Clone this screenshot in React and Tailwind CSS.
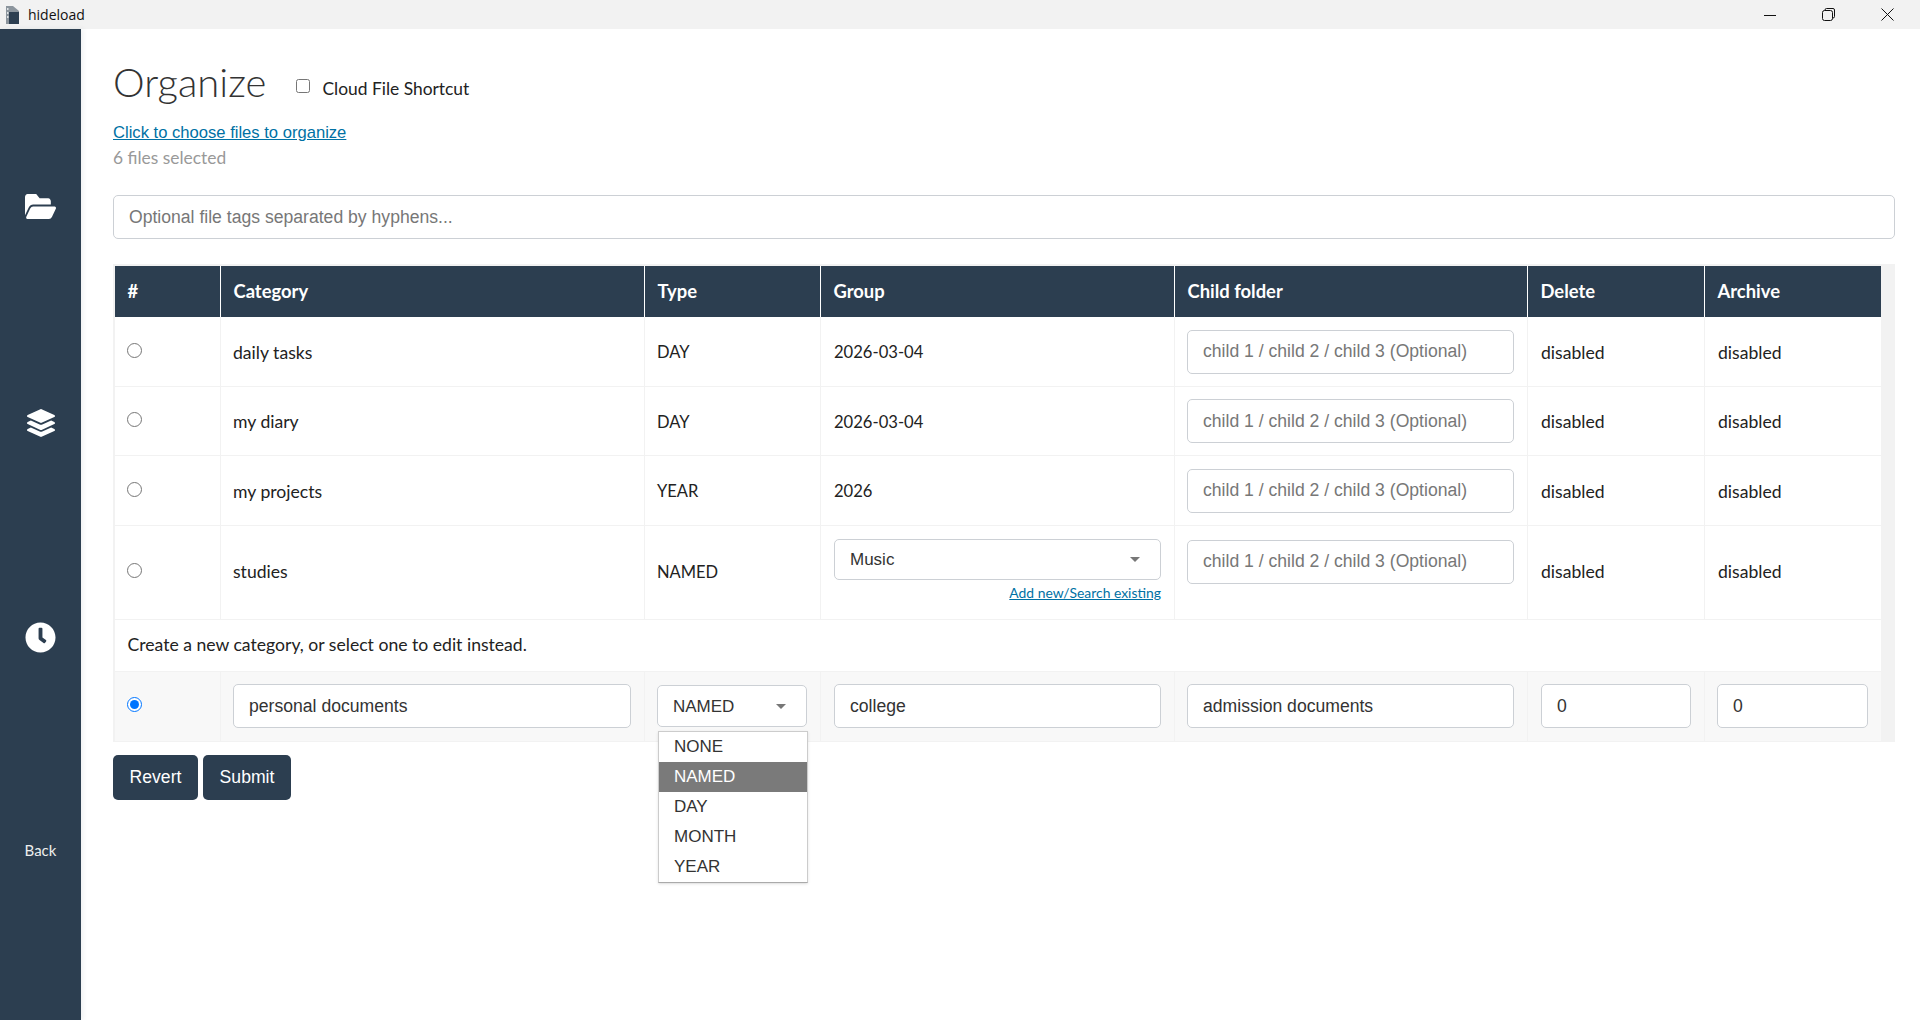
import { FaFolderOpen, FaLayerGroup, FaClock } from "react-icons/fa";

const cols = "grid grid-cols-[105px_424px_176px_354px_353px_177px_177px]";
const cell = "flex items-center pl-[12px] pr-[13px] border-l border-[#f2f2f2]";
const textCell = "flex items-center pl-[13px] pr-[12px] border-l border-[#f2f2f2]";
const sans = "font-['Liberation_Sans',sans-serif]";
const inputCls = `w-full h-[44px] rounded-[5px] border border-[#ccd0d5] bg-white px-[15px] text-[17.6px] text-[#333] outline-none placeholder:text-[#777] ${sans}`;

const rows = [
  { name: "daily tasks", type: "DAY", group: "2026-03-04" },
  { name: "my diary", type: "DAY", group: "2026-03-04" },
  { name: "my projects", type: "YEAR", group: "2026" },
];

function Caret() {
  return <span className="ml-auto mr-[5px] w-0 h-0 border-x-[5px] border-x-transparent border-t-[5px] border-t-[#777]" />;
}

function Radio({ checked }) {
  return <input type="radio" readOnly checked={!!checked} className="w-[15px] h-[15px] m-0 accent-[#0075ff]" />;
}

function ChildInput() {
  return <input placeholder="child 1 / child 2 / child 3 (Optional)" className={inputCls} />;
}

export default function App() {
  return (
    <div className="h-[1020px] overflow-hidden bg-white text-[#222] font-['Lato',sans-serif] text-[17.6px]">
      <div className="h-[29px] bg-[#f2f2f2] flex items-center">
        <svg width="13" height="18" viewBox="0 0 13 18" className="ml-[6px]">
          <path d="M0 0h7l6 5v13H0z" fill="#8c959d" />
          <path d="M3 6h10v12H3z" fill="#2c3e50" />
          <path d="M1 2h1.500v2H1zM1 6h1.500v2H1zM1 10h1.500v2H1z" fill="#dfe3e6" />
        </svg>
        <span className="ml-[9px] text-[14px] text-[#111] font-['Open_Sans',sans-serif]">hideload</span>
        <div className="ml-auto flex items-center">
          <svg width="12" height="12" viewBox="0 0 12 12" className="mr-[46px]"><path d="M0 6.5h12" stroke="#111" strokeWidth="1" /></svg>
          <svg width="13" height="13" viewBox="0 0 13 13" className="mr-[46px]" fill="none" stroke="#111"><rect x="0.5" y="2.5" width="10" height="10" rx="2" /><path d="M3 2.5V2a1.500 1.500 0 0 1 1.500-1.500h6.500a1.500 1.500 0 0 1 1.500 1.500v6.500a1.500 1.500 0 0 1-1.500 1.500h-.5" /></svg>
          <svg width="13" height="13" viewBox="0 0 13 13" className="mr-[26px]" stroke="#111" strokeWidth="1"><path d="M.5.5l12 12M12.500.5l-12 12" /></svg>
        </div>
      </div>

      <div className="flex h-[991px]">
        <aside className="w-[81px] shrink-0 bg-[#2c3e50] text-white flex flex-col items-center shadow-[2px_0_5px_rgba(44,62,80,0.08)]">
          <FaFolderOpen viewBox="0 64 576 384" preserveAspectRatio="none" className="mt-[165px] !w-[31px] !h-[25px]" />
          <FaLayerGroup className="mt-[190px] text-[28px]" />
          <FaClock className="mt-[185px] text-[31px]" />
          <span className="mt-[186px] text-[15px] text-[#eee]">Back</span>
        </aside>

        <main className="flex-1 pl-[32px] pr-[25px]">
          <div className="flex items-center mt-[31px] h-[50px]">
            <h1 className="text-[40px] font-light text-[#333] leading-none pb-[7px]">Organize</h1>
            <label className="flex items-center ml-[30px] mt-[6px]">
              <input type="checkbox" className="w-[14px] h-[14px] m-0 mb-[3px]" />
              <span className="ml-[12px] mt-[3px] text-[17.4px]">Cloud File Shortcut</span>
            </label>
          </div>
          <a className={`block mt-[11px] text-[16.6px] leading-[24px] underline text-[#0071a4] ${sans}`}>Click to choose files to organize</a>
          <p className="text-[17.4px] leading-[26px] text-[#999]">6 files selected</p>
          <input placeholder="Optional file tags separated by hyphens..." className={`${inputCls} block mt-[24px]`} />

          <div className="mt-[25px] bg-[#f2f2f2] pt-[2px] pl-[2px] pb-[1px]">
            <div className={`${cols} bg-[#2c3e50] text-white font-bold text-[18.4px] h-[51px] mr-[14px]`}>
              {["#", "Category", "Type", "Group", "Child folder", "Delete", "Archive"].map((h, i) => (
                <div key={h} className={`flex items-center px-[12.5px] pt-[1px] ${i > 0 ? "border-l border-white" : ""}`}>{h}</div>
              ))}
            </div>
            <div className="bg-white mr-[14px]">
              {rows.map((r) => (
                <div key={r.name} className={`${cols} h-[69.5px] border-b border-[#f2f2f2]`}>
                  <div className="flex items-center px-[12px] pb-[2px]"><Radio /></div>
                  <div className={`${cell} pt-[3px]`}>{r.name}</div>
                  <div className={`${cell} pt-[3px] text-[16.5px]`}>{r.type}</div>
                  <div className={`${textCell} pt-[3px] text-[16.6px]`}>{r.group}</div>
                  <div className={`${cell} pt-[1px]`}><ChildInput /></div>
                  <div className={`${textCell} pt-[3px]`}>disabled</div>
                  <div className={`${textCell} pt-[3px]`}>disabled</div>
                </div>
              ))}
              <div className={`${cols} h-[94px] border-b border-[#f2f2f2]`}>
                <div className="flex items-center px-[12px] pb-[3px]"><Radio /></div>
                <div className={cell}>studies</div>
                <div className={`${cell} text-[16.5px]`}>NAMED</div>
                <div className={`${textCell} flex-col !items-stretch !pr-[13px] pt-[13px]`}>
                  <div className={`flex items-center h-[41px] rounded-[5px] border border-[#ccd0d5] pl-[15px] pr-[15px] pt-[1px] text-[17px] text-[#333] ${sans}`}>
                    Music
                    <Caret />
                  </div>
                  <a className="mt-[3px] text-right text-[13.9px] leading-[20px] underline text-[#0071a4]">Add new/Search existing</a>
                </div>
                <div className={`${cell} !items-start pt-[14px]`}><ChildInput /></div>
                <div className={textCell}>disabled</div>
                <div className={textCell}>disabled</div>
              </div>
              <div className="h-[52px] flex items-center px-[12.5px] pt-[1px] border-b border-[#f2f2f2]">Create a new category, or select one to edit instead.</div>
            </div>
            <div className={`${cols} h-[69px] bg-[#f8f8f8] mr-[14px]`}>
              <div className="flex items-center px-[12px] pb-[3px]"><Radio checked /></div>
              <div className={cell}><input defaultValue="personal documents" className={inputCls} /></div>
              <div className={`${cell} relative`}>
                <div className={`flex items-center w-full h-[42px] rounded-[5px] border border-[#ccd0d5] bg-white pl-[15px] pr-[15px] pt-[1px] text-[17px] text-[#333] ${sans}`}>
                  NAMED
                  <Caret />
                </div>
                <ul className={`absolute left-[13px] top-[59px] w-[150px] h-[152px] bg-white border border-[#ccc] border-b-[#aaa] shadow-sm z-10 text-[17px] text-[#333] ${sans}`}>
                  {["NONE", "NAMED", "DAY", "MONTH", "YEAR"].map((o) => (
                    <li key={o} className={`h-[30px] leading-[30px] px-[15px] ${o === "NAMED" ? "bg-[#7a7a7a] text-white" : ""}`}>{o}</li>
                  ))}
                </ul>
              </div>
              <div className={`${textCell} !pr-[13px]`}><input defaultValue="college" className={inputCls} /></div>
              <div className={cell}><input defaultValue="admission documents" className={inputCls} /></div>
              <div className={`${textCell} !pr-[13px]`}><input defaultValue="0" className={inputCls} /></div>
              <div className={cell}><input defaultValue="0" className={inputCls} /></div>
            </div>
          </div>

          <div className={`flex gap-[5px] mt-[13px] text-white text-[17.6px] ${sans}`}>
            <button className="h-[45px] w-[85px] rounded-[5px] bg-[#2c3e50]">Revert</button>
            <button className="h-[45px] w-[88px] rounded-[5px] bg-[#2c3e50]">Submit</button>
          </div>
        </main>
      </div>
    </div>
  );
}
